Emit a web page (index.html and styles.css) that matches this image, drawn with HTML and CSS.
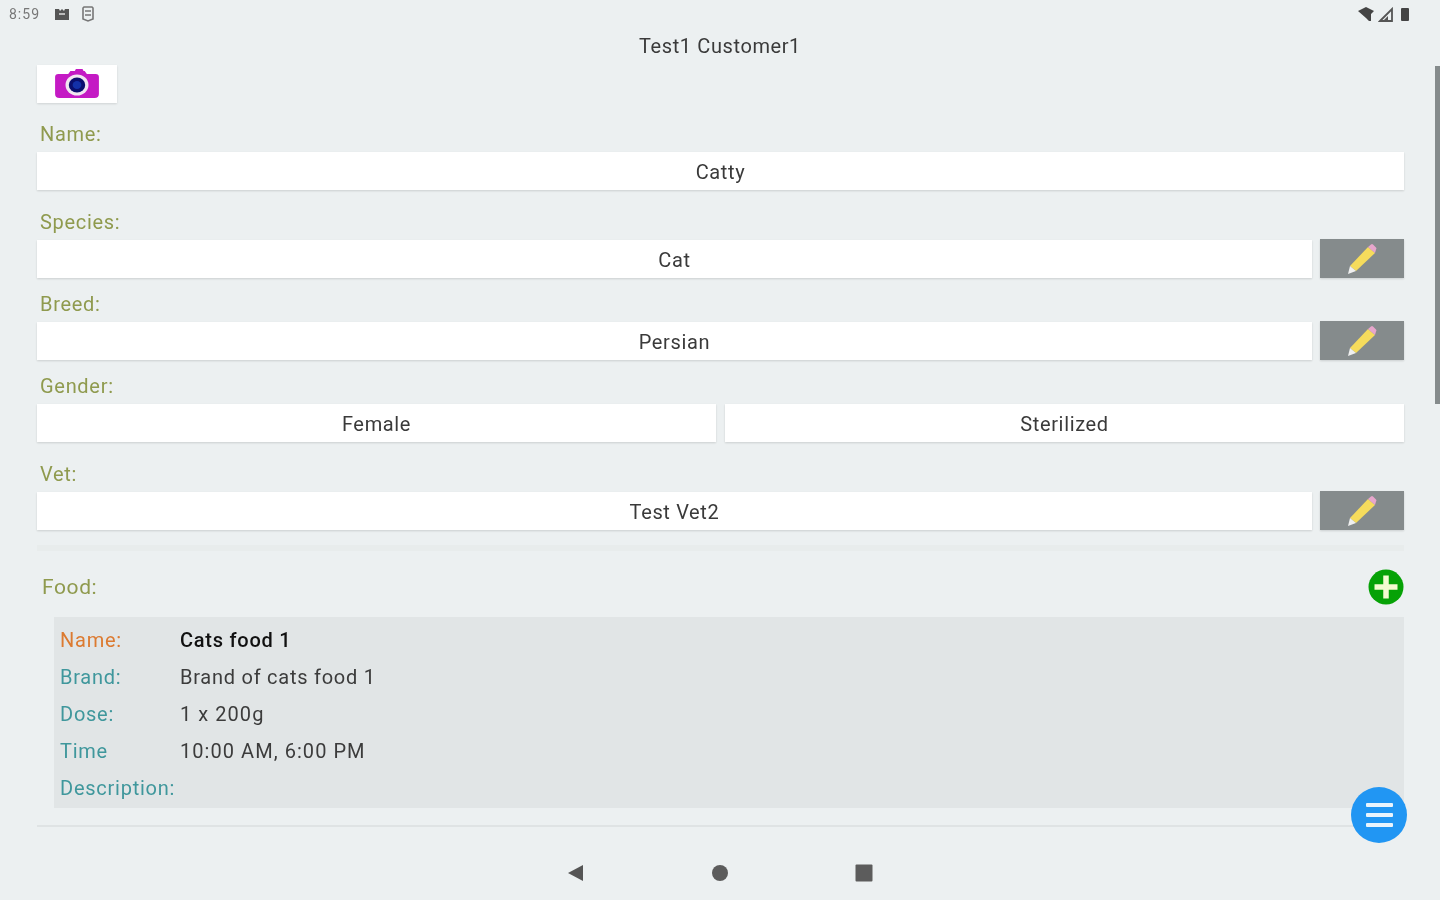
FILE: index.html
```html
<!DOCTYPE html>
<html lang="en">
<head>
<meta charset="utf-8">
<title>Test1 Customer1</title>
<link rel="stylesheet" href="styles.css">
</head>
<body>
<div class="screen">
  <header class="status">
    <div class="status-left">
      <span class="clock">8:59</span>
      <svg class="st-a" width="16" height="14" viewBox="0 0 16 14"><path d="M1 2h4l1 2 2-2 2 2 1-2h4v11H1z" fill="#555"/><path d="M5 6h6v2H5z" fill="#bbb"/></svg>
      <svg class="st-b" width="12" height="16" viewBox="0 0 12 16"><path d="M2 1h8l1 1v11l-5 2-5-2V2z" fill="none" stroke="#777" stroke-width="1.6"/><path d="M3 5h6M3 9h6" stroke="#777" stroke-width="1.6"/></svg>
    </div>
    <div class="status-right">
      <svg width="19" height="16" viewBox="0 0 19 16"><path d="M0 5 8 1l8 4-3 3v7h-2L8 12z" fill="#444"/></svg>
      <svg width="15" height="15" viewBox="0 0 15 15"><path d="M2 14 14 2v12z" fill="none" stroke="#555" stroke-width="1.8"/><path d="M5 14l5-5v5z" fill="#555"/></svg>
      <svg class="st-bat" width="10" height="15" viewBox="0 0 10 15"><rect x="1" y="1" width="8" height="13" rx="1" fill="#444"/></svg>
    </div>
  </header>
  <h1 class="title">Test1 Customer1</h1>
  <main class="content">
    <button class="camera" type="button" aria-label="Photo">
      <svg width="46" height="32" viewBox="1 0 42 32" preserveAspectRatio="none">
        <path d="M2 9q0-3 3-3h9l2-3h4l1-2h6l1 2h1l2 3h8q3 0 3 3v17q0 4-4 4H6q-4 0-4-4z" fill="#c41ac4"/>
        <circle cx="22" cy="17" r="10.5" fill="#f1e6f1"/>
        <circle cx="22" cy="17" r="7.5" fill="#0b0f6e"/>
        <circle cx="22" cy="17" r="4" fill="#1330a8"/>
      </svg>
    </button>

    <label class="lbl lbl-first">Name:</label>
    <div class="field">Catty</div>

    <label class="lbl lbl-wide">Species:</label>
    <div class="row">
      <div class="field grow">Cat</div>
      <button class="edit" type="button" aria-label="Edit"><svg width="32" height="32" viewBox="0 0 32 32"><path d="M4 23 22 4l7 6L10 28z" fill="#f6dc5c"/><path d="M22 4l3-2.500q1-1 2 0l3 3q1 1 0 2l-1 3.500z" fill="#e7a6cc"/><path d="M4 23l6 5-8 3z" fill="#f0f0f0"/></svg></button>
    </div>

    <label class="lbl">Breed:</label>
    <div class="row">
      <div class="field grow">Persian</div>
      <button class="edit" type="button" aria-label="Edit"><svg width="32" height="32" viewBox="0 0 32 32"><path d="M4 23 22 4l7 6L10 28z" fill="#f6dc5c"/><path d="M22 4l3-2.500q1-1 2 0l3 3q1 1 0 2l-1 3.500z" fill="#e7a6cc"/><path d="M4 23l6 5-8 3z" fill="#f0f0f0"/></svg></button>
    </div>

    <label class="lbl">Gender:</label>
    <div class="row row-split">
      <div class="field half">Female</div>
      <div class="field half">Sterilized</div>
    </div>

    <label class="lbl lbl-wide">Vet:</label>
    <div class="row">
      <div class="field grow">Test Vet2</div>
      <button class="edit" type="button" aria-label="Edit"><svg width="32" height="32" viewBox="0 0 32 32"><path d="M4 23 22 4l7 6L10 28z" fill="#f6dc5c"/><path d="M22 4l3-2.500q1-1 2 0l3 3q1 1 0 2l-1 3.500z" fill="#e7a6cc"/><path d="M4 23l6 5-8 3z" fill="#f0f0f0"/></svg></button>
    </div>

    <div class="band"></div>

    <div class="food-head">
      <span class="food-title">Food:</span>
      <svg class="add" width="36" height="36" viewBox="0 0 36 36"><circle cx="18" cy="18" r="17.5" fill="#06a206"/><path d="M18 6.500v23M6.500 18h23" stroke="#f4fbd0" stroke-width="5.500"/></svg>
    </div>

    <section class="food-card">
      <div class="food-row"><span class="key key-name">Name:</span><strong class="val-strong">Cats food 1</strong></div>
      <div class="food-row"><span class="key">Brand:</span><span class="val">Brand of cats food 1</span></div>
      <div class="food-row"><span class="key">Dose:</span><span class="val val-num">1 x 200g</span></div>
      <div class="food-row"><span class="key">Time</span><span class="val val-num">10:00 AM, 6:00 PM</span></div>
      <div class="food-row"><span class="key">Description:</span><span class="val"></span></div>
    </section>
    <div class="rule"></div>
  </main>
  <nav class="nav">
    <svg width="18" height="18" viewBox="0 0 18 18"><path d="M16 1v16L1 9z" fill="#555"/></svg>
    <svg width="18" height="18" viewBox="0 0 18 18"><circle cx="9" cy="9" r="8" fill="#5c5c5c"/></svg>
    <svg width="18" height="18" viewBox="0 0 18 18"><rect x="0.5" y="0.5" width="17" height="17" rx="1" fill="#5c5c5c"/></svg>
  </nav>
  <div class="scrollbar"></div>
  <button class="fab" type="button" aria-label="Menu"><span></span><span></span><span></span></button>
</div>
</body>
</html>
```
FILE: styles.css
```css
* { box-sizing: border-box; }
html, body { margin: 0; height: 100%; }
body { background: #ecf0f1; overflow: hidden; }
.screen {
  position: relative;
  width: 1440px;
  height: 900px;
  background: #ecf0f1;
  font-family: Roboto, "Liberation Sans", sans-serif;
  color: #333;
  filter: blur(0.7px);
  display: flex;
  flex-direction: column;
}
.status {
  height: 28px;
  padding: 0 30px 0 9px;
  display: flex;
  justify-content: space-between;
  align-items: center;
}
.status-left, .status-right { display: flex; align-items: center; }
.status-right { gap: 1px; }
.st-bat { margin-left: 6px; }
.clock { font-size: 14px; letter-spacing: 1px; color: #777; width: 45px; }
.st-a { margin-right: 12px; }
.title {
  margin: 0;
  height: 37px;
  line-height: 36px;
  font-size: 20px;
  font-weight: 400;
  letter-spacing: 0.6px;
  text-align: center;
  color: #3a3a3a;
}
.content { padding: 0 36px 0 37px; }
.camera {
  display: flex;
  align-items: center;
  justify-content: center;
  width: 80px;
  height: 38px;
  padding: 0;
  border: 0;
  background: #fff;
  box-shadow: 0 1px 2px rgba(0,0,0,.12);
}
.lbl {
  display: block;
  height: 36px;
  margin-top: 8px;
  padding-left: 3px;
  line-height: 36px;
  font-size: 20px;
  letter-spacing: 0.7px;
  color: #8f9a4e;
}
.lbl-first { margin-top: 13px; }
.lbl-wide { margin-top: 14px; }
.field {
  height: 38px;
  line-height: 41px;
  text-align: center;
  font-size: 20px;
  letter-spacing: 0.65px;
  color: #3a3a3a;
  background: #fff;
  box-shadow: 0 1px 2px rgba(0,0,0,.14);
}
.row { display: flex; gap: 8px; }
.row-split { gap: 9px; }
.grow { flex: 1; }
.half { flex: 1; }
.edit {
  display: flex;
  align-items: center;
  justify-content: center;
  width: 84px;
  height: 39px;
  margin-top: -1px;
  padding: 0;
  border: 0;
  background: #858b8c;
  box-shadow: 0 1px 2px rgba(0,0,0,.14);
}
.band { height: 6px; margin-top: 15px; background: #e8ecec; }
.food-head {
  display: flex;
  align-items: center;
  justify-content: space-between;
  height: 36px;
  margin-top: 18px;
  padding-left: 5px;
}
.food-title { font-size: 21px; letter-spacing: 0.6px; color: #8f9a4e; }
.food-card {
  margin-top: 12px;
  margin-left: 17px;
  padding: 5px 6px 0;
  height: 191px;
  background: #e1e5e6;
}
.food-row {
  display: flex;
  height: 37.1px;
  line-height: 37px;
  font-size: 20px;
  letter-spacing: 0.75px;
}
.key { width: 120px; flex: none; color: #3f979c; white-space: nowrap; }
.key-name { color: #dc7a30; }
.val { color: #3c3c3c; }
.val-num { letter-spacing: 1.05px; }
.val-strong { font-weight: 500; color: #111; }
.rule { height: 2px; margin-top: 17px; background: #dfe3e4; }
.nav {
  display: flex;
  justify-content: center;
  align-items: center;
  gap: 126px;
  margin-top: 37px;
}
.scrollbar {
  position: absolute;
  right: 0;
  top: 66px;
  width: 5px;
  height: 338px;
  background: #858b8c;
}
.fab {
  position: absolute;
  left: 1351px;
  top: 787px;
  width: 56px;
  height: 56px;
  padding: 0;
  border: 0;
  border-radius: 50%;
  background: #2196f3;
  display: flex;
  flex-direction: column;
  align-items: center;
  justify-content: center;
  gap: 6px;
}
.fab span { display: block; width: 27px; height: 4px; border-radius: 1px; background: #e9f4fd; }
```
